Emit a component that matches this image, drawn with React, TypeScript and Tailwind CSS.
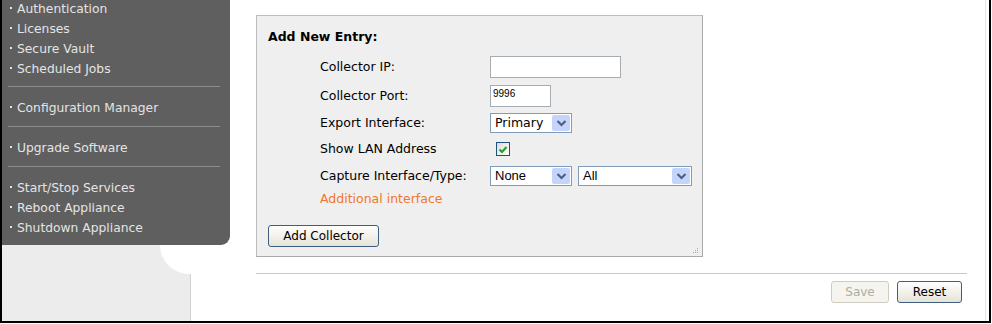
import type React from "react";

const menuGroups: string[][] = [
  ["Authentication", "Licenses", "Secure Vault", "Scheduled Jobs"],
  ["Configuration Manager"],
  ["Upgrade Software"],
  ["Start/Stop Services", "Reboot Appliance", "Shutdown Appliance"],
];

function MenuItem({ label }: { label: string }) {
  return (
    <div className="flex h-[20px] items-center leading-[20px]">
      <span className="mb-[2px] ml-[8px] h-[2px] w-[2px] bg-[#e4e4e4]" />
      <span className="ml-[5px] text-[12.3px] text-[#e4e4e4]">{label}</span>
    </div>
  );
}

function Sidebar() {
  return (
    <div className="relative z-10 h-[245px] w-[228px] shrink-0 rounded-br-[9px] bg-[#5f5f5f]">
      <div className="mt-[-1px]">
        {menuGroups[0].map((l) => (
          <MenuItem key={l} label={l} />
        ))}
      </div>
      <div className="ml-[6px] mt-[7px] h-px w-[212px] bg-[#8c8c8c]" />
      <div className="mt-[11px]">
        <MenuItem label={menuGroups[1][0]} />
      </div>
      <div className="ml-[6px] mt-[8px] h-px w-[212px] bg-[#8c8c8c]" />
      <div className="mt-[11px]">
        <MenuItem label={menuGroups[2][0]} />
      </div>
      <div className="ml-[6px] mt-[8px] h-px w-[212px] bg-[#8c8c8c]" />
      <div className="mt-[11px]">
        {menuGroups[3].map((l) => (
          <MenuItem key={l} label={l} />
        ))}
      </div>
    </div>
  );
}

function Chevron() {
  return (
    <span className="flex h-full w-[18px] items-center justify-center rounded-[2px] bg-[#c4d4fb]">
      <svg width="11" height="8" viewBox="0 0 11 8" aria-hidden>
        <path d="M1.5 2 L5.5 6 L9.5 2" fill="none" stroke="#4d6185" strokeWidth="2.2" />
      </svg>
    </span>
  );
}

function Select({ value, className = "", textClass = "" }: { value: string; className?: string; textClass?: string }) {
  return (
    <div className={`flex h-[20px] items-center justify-between border border-[#7f9db9] bg-white p-[1px] ${className}`}>
      <span className={`pl-[3px] text-black ${textClass}`}>{value}</span>
      <Chevron />
    </div>
  );
}

function Row({ label, mt, h, children }: { label: string; mt: string; h: string; children?: React.ReactNode }) {
  return (
    <div className={`flex items-center ${mt} ${h}`}>
      <span className="w-[170px] shrink-0 text-[12.5px] text-black">{label}</span>
      {children}
    </div>
  );
}

function XpButton({ children, className = "" }: { children: React.ReactNode; className?: string }) {
  return (
    <button
      className={`flex h-[22px] items-center justify-center rounded-[3px] border border-[#3d5f83] bg-gradient-to-b from-white to-[#e6e3d6] text-[12px] text-black ${className}`}
    >
      {children}
    </button>
  );
}

export default function App() {
  return (
    <div className="h-[324px] w-[992px] overflow-hidden bg-white font-['DejaVu_Sans',Verdana,sans-serif]">
      <div className="flex h-[323px] w-[991px] border-b-2 border-l-2 border-r-2 border-black">
        {/* left column */}
        <div className="flex w-[189px] shrink-0 flex-col border-r border-[#d4d4d4] bg-[#ececec]">
          <Sidebar />
          <div className="flex justify-end">
            <div className="mr-[-1px] h-[29px] w-[31px] rounded-bl-[30px] bg-white" />
          </div>
        </div>

        {/* content */}
        <div className="flex w-[795px] shrink-0 flex-col border-r border-[#e6e6e6] bg-white">
          <div className="relative ml-[65px] mt-[15px] flex h-[242px] w-[447px] flex-col border border-[#bcbcbc] border-b-[#a9a9a9] border-r-[#a9a9a9] bg-[#efefef] pl-[11px]">
            <div className="mt-[13px] text-[12.5px] font-bold leading-[16px] text-black">Add New Entry:</div>
            <div className="ml-[52px] flex flex-col">
              <Row label="Collector IP:" mt="mt-[11px]" h="h-[22px]">
                <div className="h-[22px] w-[131px] border border-[#a5acb2] bg-white" />
              </Row>
              <Row label="Collector Port:" mt="mt-[7px]" h="h-[22px]">
                <div className="h-[22px] w-[61px] border border-[#a5acb2] bg-white pl-[2px] pt-[3px] font-['Liberation_Sans',Arial,sans-serif] text-[10px] leading-[10px] text-black">
                  9996
                </div>
              </Row>
              <Row label="Export Interface:" mt="mt-[6px]" h="h-[20px]">
                <Select value="Primary" className="w-[82px]" textClass="text-[12.5px]" />
              </Row>
              <Row label="Show LAN Address" mt="mt-[8px]" h="h-[16px]">
                <div className="ml-[6px] flex h-[14px] w-[14px] items-center justify-center border border-[#1c5180] bg-gradient-to-br from-[#dcdcd7] to-white">
                  <svg width="10" height="9" viewBox="0 0 10 9" aria-hidden>
                    <path d="M1.5 4.5 L4 7 L8.5 2" fill="none" stroke="#21a121" strokeWidth="2" />
                  </svg>
                </div>
              </Row>
              <Row label="Capture Interface/Type:" mt="mt-[9px]" h="h-[20px]">
                <Select value="None" className="w-[82px]" textClass="font-['Liberation_Sans',Arial,sans-serif] text-[13px]" />
                <Select value="All" className="ml-[6px] w-[114px]" textClass="font-['Liberation_Sans',Arial,sans-serif] text-[13px]" />
              </Row>
              <div className="mt-[5px] flex h-[16px] items-center text-[12.5px] text-[#f0782c]">Additional interface</div>
            </div>
            <XpButton className="mt-[18px] w-[111px]">Add Collector</XpButton>
            <svg className="absolute bottom-[2px] right-[3px]" width="7" height="7" viewBox="0 0 7 7" aria-hidden>
              <rect x="5" y="1" width="1" height="1" fill="#a8a8a8" />
              <rect x="3" y="3" width="1" height="1" fill="#a8a8a8" />
              <rect x="5" y="3" width="1" height="1" fill="#a8a8a8" />
              <rect x="1" y="5" width="1" height="1" fill="#a8a8a8" />
              <rect x="3" y="5" width="1" height="1" fill="#a8a8a8" />
              <rect x="5" y="5" width="1" height="1" fill="#a8a8a8" />
            </svg>
          </div>

          <div className="ml-[65px] mr-[18px] mt-[16px] h-px bg-[#c8c8c8]" />

          <div className="mr-[23px] mt-[7px] flex justify-end gap-[8px]">
            <button className="flex h-[22px] w-[58px] items-center justify-center rounded-[3px] border border-[#cfcdc2] bg-[#f5f4ee] text-[12px] text-[#b0ad9f]">
              Save
            </button>
            <XpButton className="w-[65px]">Reset</XpButton>
          </div>
        </div>
        <div className="flex-1" />
      </div>
    </div>
  );
}
